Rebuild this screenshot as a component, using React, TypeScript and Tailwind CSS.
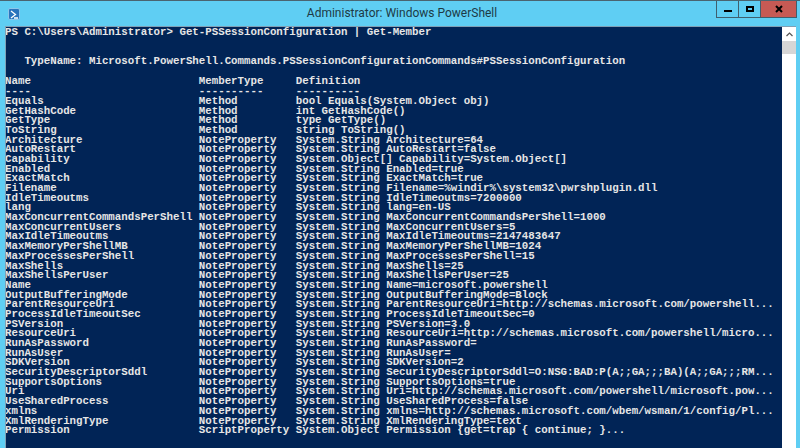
const rows: [string, string, string][] = [
  ["Name", "MemberType", "Definition"],
  ["----", "----------", "----------"],
  ["Equals", "Method", "bool Equals(System.Object obj)"],
  ["GetHashCode", "Method", "int GetHashCode()"],
  ["GetType", "Method", "type GetType()"],
  ["ToString", "Method", "string ToString()"],
  ["Architecture", "NoteProperty", "System.String Architecture=64"],
  ["AutoRestart", "NoteProperty", "System.String AutoRestart=false"],
  ["Capability", "NoteProperty", "System.Object[] Capability=System.Object[]"],
  ["Enabled", "NoteProperty", "System.String Enabled=true"],
  ["ExactMatch", "NoteProperty", "System.String ExactMatch=true"],
  ["Filename", "NoteProperty", "System.String Filename=%windir%\\system32\\pwrshplugin.dll"],
  ["IdleTimeoutms", "NoteProperty", "System.String IdleTimeoutms=7200000"],
  ["lang", "NoteProperty", "System.String lang=en-US"],
  ["MaxConcurrentCommandsPerShell", "NoteProperty", "System.String MaxConcurrentCommandsPerShell=1000"],
  ["MaxConcurrentUsers", "NoteProperty", "System.String MaxConcurrentUsers=5"],
  ["MaxIdleTimeoutms", "NoteProperty", "System.String MaxIdleTimeoutms=2147483647"],
  ["MaxMemoryPerShellMB", "NoteProperty", "System.String MaxMemoryPerShellMB=1024"],
  ["MaxProcessesPerShell", "NoteProperty", "System.String MaxProcessesPerShell=15"],
  ["MaxShells", "NoteProperty", "System.String MaxShells=25"],
  ["MaxShellsPerUser", "NoteProperty", "System.String MaxShellsPerUser=25"],
  ["Name", "NoteProperty", "System.String Name=microsoft.powershell"],
  ["OutputBufferingMode", "NoteProperty", "System.String OutputBufferingMode=Block"],
  ["ParentResourceUri", "NoteProperty", "System.String ParentResourceUri=http://schemas.microsoft.com/powershell..."],
  ["ProcessIdleTimeoutSec", "NoteProperty", "System.String ProcessIdleTimeoutSec=0"],
  ["PSVersion", "NoteProperty", "System.String PSVersion=3.0"],
  ["ResourceUri", "NoteProperty", "System.String ResourceUri=http://schemas.microsoft.com/powershell/micro..."],
  ["RunAsPassword", "NoteProperty", "System.String RunAsPassword="],
  ["RunAsUser", "NoteProperty", "System.String RunAsUser="],
  ["SDKVersion", "NoteProperty", "System.String SDKVersion=2"],
  ["SecurityDescriptorSddl", "NoteProperty", "System.String SecurityDescriptorSddl=O:NSG:BAD:P(A;;GA;;;BA)(A;;GA;;;RM..."],
  ["SupportsOptions", "NoteProperty", "System.String SupportsOptions=true"],
  ["Uri", "NoteProperty", "System.String Uri=http://schemas.microsoft.com/powershell/microsoft.pow..."],
  ["UseSharedProcess", "NoteProperty", "System.String UseSharedProcess=false"],
  ["xmlns", "NoteProperty", "System.String xmlns=http://schemas.microsoft.com/wbem/wsman/1/config/Pl..."],
  ["XmlRenderingType", "NoteProperty", "System.String XmlRenderingType=text"],
  ["Permission", "ScriptProperty", "System.Object Permission {get=trap { continue; }..."],
];

export default function App() {
  return (
    <div className="w-[800px] h-[448px] overflow-hidden flex flex-col bg-[#5fcef3] border-t border-[#4a6470] font-['Roboto',sans-serif]">
      <div className="h-[25px] shrink-0 flex items-start">
        <div className="w-[12px] h-[12px] ml-[8px] mt-[7px] rounded-[2px] bg-[#2a74bd] border border-[#8cc6ea] flex items-center justify-center">
          <svg width="9" height="9" viewBox="0 0 9 9"><path d="M1 1 L5.5 4.5 L1 8 M4 8 H8" stroke="#fff" strokeWidth="1.3" fill="none" /></svg>
        </div>
        <div className="flex-1 text-center text-[12px] leading-[16px] mt-[4px] text-[#1d3a46] pl-[68px]">Administrator: Windows PowerShell</div>
        <div className="flex h-[17px] border border-t-0 border-[#3f5f6e] mr-[3px] w-[81px]">
          <div className="w-[22px] flex items-center justify-center border-r border-[#3f5f6e]">
            <div className="w-[8px] h-[2px] bg-black mt-[4px]" />
          </div>
          <div className="w-[22px] flex items-center justify-center border-r border-[#3f5f6e]">
            <div className="w-[8px] h-[6px] border-2 border-black" />
          </div>
          <div className="flex-1 bg-[#c75a54] flex items-center justify-center">
            <svg width="8" height="8" viewBox="0 0 8 8"><path d="M1 1 L7 7 M7 1 L1 7" stroke="#000" strokeWidth="2" /></svg>
          </div>
        </div>
      </div>
      <div className="flex-1 flex ml-[5px] mr-[4px] min-h-0 border-t border-l border-[#7fa0b5]">
        <div className="flex-1 bg-[#012456] text-[#e6e6e6] font-['Liberation_Mono',monospace] font-bold text-[10.78px] leading-[9.7px] whitespace-pre pt-[1px] overflow-hidden">
          <div className="-ml-[1px]">
            <div className="h-[9.7px]">PS C:\Users\Administrator&gt; Get-PSSessionConfiguration | Get-Member</div>
            <div className="h-[19.4px]" />
            <div className="h-[9.7px]">   TypeName: Microsoft.PowerShell.Commands.PSSessionConfigurationCommands#PSSessionConfiguration</div>
            <div className="h-[10.7px]" />
            {rows.map((r, i) => (
              <div key={i} className="h-[9.7px]">{r[0].padEnd(30) + r[1].padEnd(15) + r[2]}</div>
            ))}
          </div>
        </div>
        <div className="w-[14px] shrink-0 bg-white flex flex-col">
          <div className="h-[14px] flex items-center justify-center">
            <svg width="7" height="5" viewBox="0 0 7 5"><path d="M0.5 4 L3.5 1 L6.5 4" stroke="#555" strokeWidth="1.2" fill="none" /></svg>
          </div>
          <div className="h-[13px] bg-[#d6d6d6]" />
        </div>
      </div>
    </div>
  );
}
